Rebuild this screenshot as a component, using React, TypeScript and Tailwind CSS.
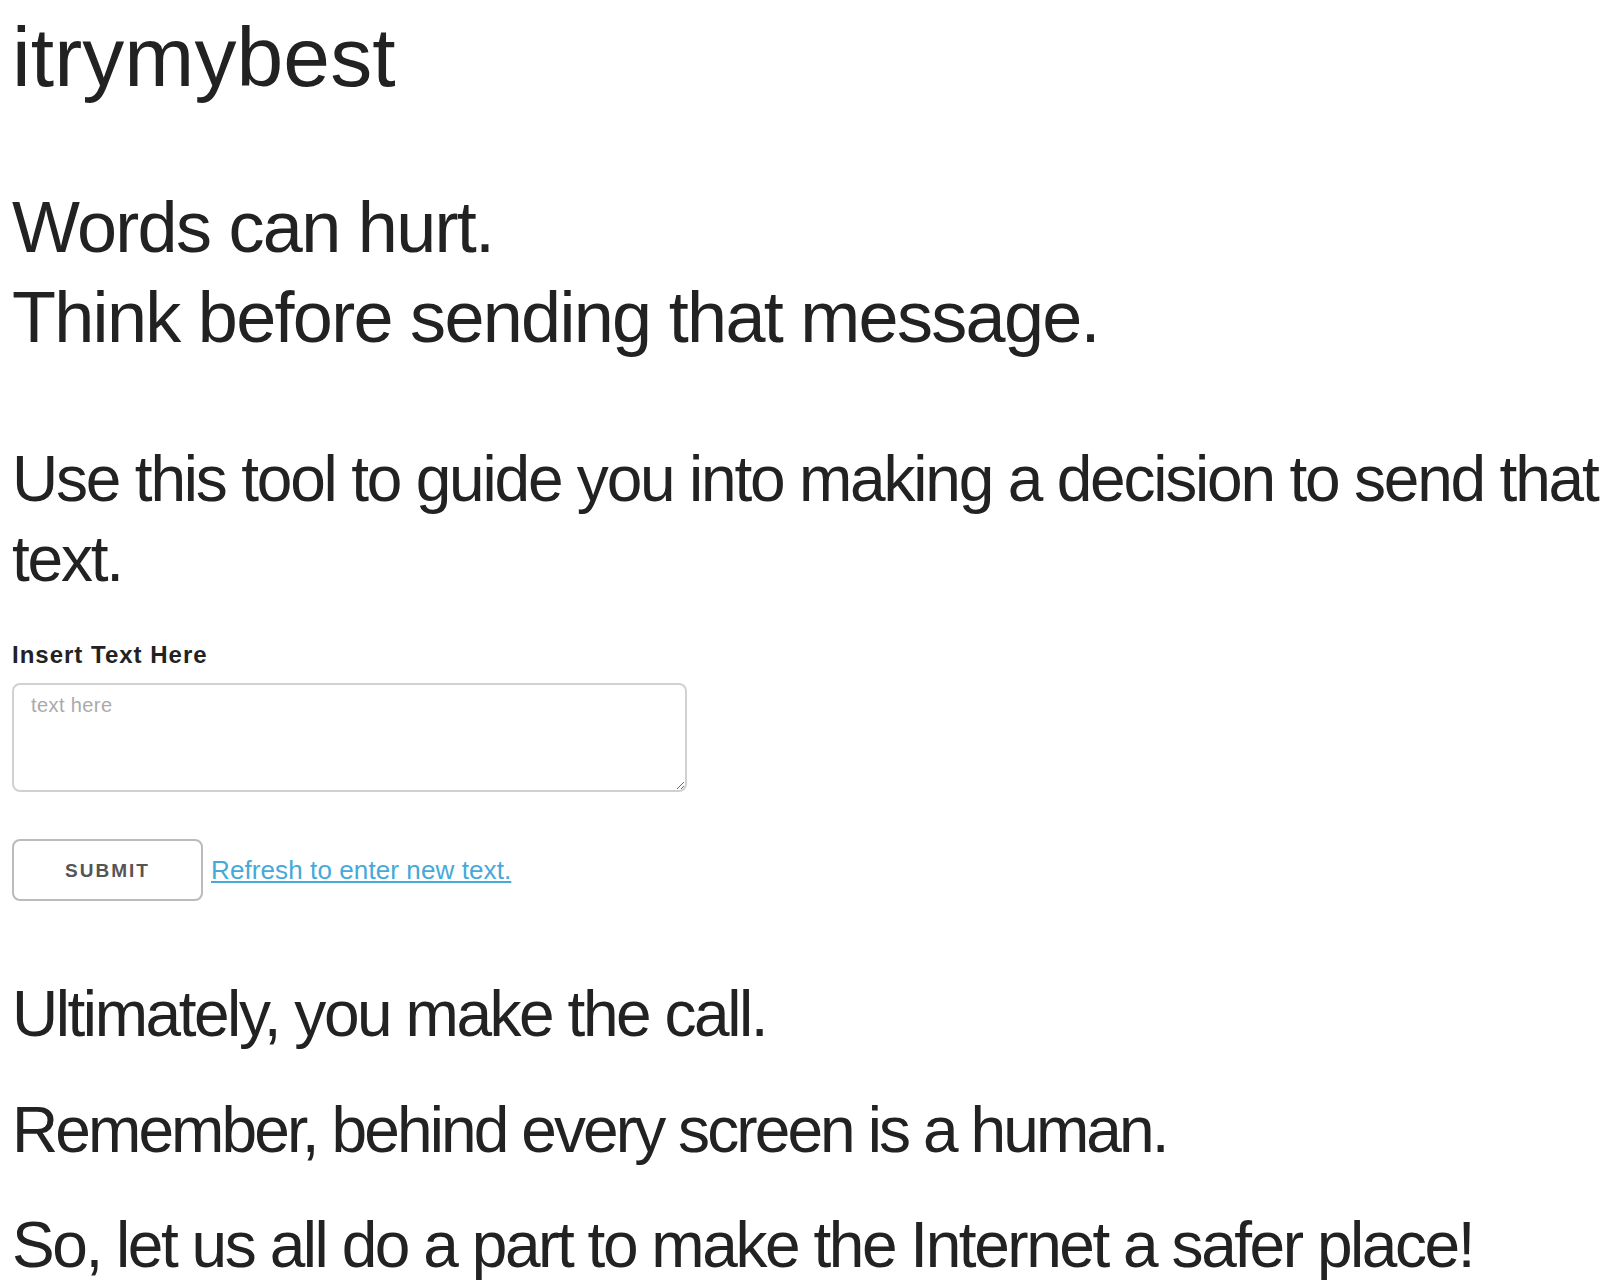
import React from 'react';

const lineText = "text-[64px] leading-[80px] font-normal";

export default function App() {
  return (
    <main className="min-h-screen bg-white pl-[12px] pr-[8px] pt-[7px] text-[#222] font-['Liberation_Sans',Arial,sans-serif]">
      <h1 className="text-[84px] leading-[100px] tracking-[0.1px] font-normal">itrymybest</h1>

      <h2 className="mt-[75px] text-[72px] leading-[90px] tracking-[-1.7px] font-normal">
        Words can hurt.
        <br />
        Think before sending that message.
      </h2>

      <p className={`mt-[77px] tracking-[-2.2px] ${lineText}`}>
        Use this tool to guide you into making a decision to send that text.
      </p>

      <form className="flex flex-col" onSubmit={(e) => e.preventDefault()}>
        <label
          htmlFor="message"
          className="mt-[41px] text-[24px] leading-[30px] font-bold tracking-[1px]"
        >
          Insert Text Here
        </label>
        <textarea
          id="message"
          placeholder="text here"
          className="mt-[13px] w-[675px] h-[109px] border-2 border-[#d1d1d1] rounded-[8px] px-[17px] pt-[6px] text-[20px] leading-[28px] tracking-[0.4px] text-[#222] placeholder:text-[#aaa] outline-none"
        />

        <div className="mt-[47px] flex items-center">
          <button
            type="submit"
            className="h-[62px] w-[191px] pt-[3px] border-2 border-[#bbb] rounded-[8px] bg-white text-[19px] font-bold tracking-[2px] text-[#555] uppercase"
          >
            Submit
          </button>
          <a href="#" className="ml-[8px] text-[26px] tracking-[0.1px] text-[#45a9d9] underline">
            Refresh to enter new text.
          </a>
        </div>
      </form>

      <section className="mt-[73px] flex flex-col gap-[35.5px]">
        <p className={`tracking-[-2.45px] ${lineText}`}>Ultimately, you make the call.</p>
        <p className={`tracking-[-2.9px] ${lineText}`}>Remember, behind every screen is a human.</p>
        <p className={`tracking-[-2.45px] ${lineText}`}>So, let us all do a part to make the Internet a safer place!</p>
      </section>
    </main>
  );
}
